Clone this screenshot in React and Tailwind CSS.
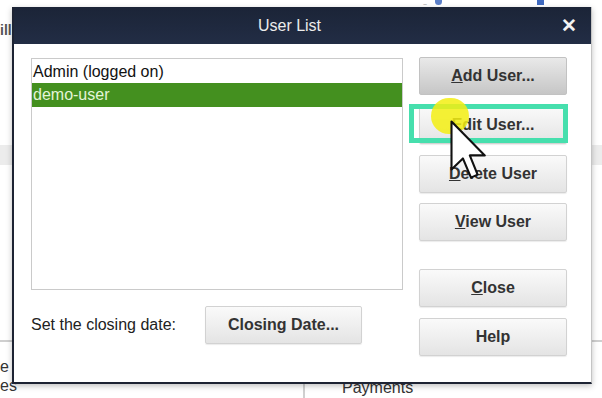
import React from 'react';

const btn =
  'flex items-center justify-center w-[148px] h-[38px] rounded-[2px] border border-[#d2d2d2] bg-gradient-to-b from-[#fafafa] to-[#e4e4e4] text-[16px] font-bold text-[#333] shadow-[0_1px_1px_rgba(0,0,0,0.08)]';

const Cursor = () => (
  <svg width="36" height="60" viewBox="0 0 12 20" className="block">
    <path
      d="M0.5 0.5 L0.5 16.5 L4.3 12.8 L7 19.2 L9.2 18.2 L6.6 11.8 L11.6 11.8 Z"
      fill="#fff"
      stroke="#111"
      strokeWidth="0.7"
      strokeLinejoin="round"
    />
  </svg>
);

export default function App() {
  return (
    <div className="relative w-[602px] h-[398px] overflow-hidden bg-white font-['Liberation_Sans',Arial,sans-serif]">
      {/* app behind the dialog */}
      <div className="flex flex-col">
        <div className="flex h-[7px] items-start">
          <span className="ml-[423px] mt-[1px] text-[7px] leading-none text-[#999]">~</span>
          <span className="ml-[8px] w-[7px] h-[5px] rounded-b-full bg-[#5b7fc8]" />
          <span className="ml-[95px] w-[7px] h-[5px] bg-[#3f6ac0]" />
        </div>
        <div className="mt-[15px] h-[16px] text-[14px] font-bold leading-[16px] text-[#555]">ill</div>
        <div className="mt-[107px] h-[20px] bg-[#ececec]" />
        <div className="mt-[175px] h-[2px] bg-[#cfcfcf]" />
        <div className="flex h-[57px]">
          <div className="w-[303px] flex flex-col text-[16px] leading-[19px] text-[#333]">
            <span className="mt-[15px]">e</span>
            <span>es</span>
          </div>
          <div className="w-[2px] bg-[#d0d0d0]" />
          <div className="pl-[37px] pt-[36px] text-[16px] leading-[19px] text-[#333]">Payments</div>
        </div>
      </div>

      {/* User List dialog */}
      <div className="absolute left-[12px] top-[7px] w-[580px] h-[377px] flex flex-col bg-white border-l-2 border-b-2 border-l-[#1d2333] border-b-[#1d2333] border-r border-r-[#c4c4c4] shadow-[0_2px_6px_rgba(0,0,0,0.25)]">
        <div className="flex h-[37px] shrink-0 items-center bg-gradient-to-b from-[#1b2437] to-[#222d45]">
          <div className="flex-1 pl-[4px] text-center text-[16px] text-[#ececec]">User List</div>
          <div className="w-[30px] text-[19px] font-bold leading-none text-[#f2f2f2]">✕</div>
        </div>

        <div className="flex pl-[17px]">
          <div className="flex flex-col pt-[14px]">
            <div className="w-[372px] h-[232px] border border-[#cacaca] bg-white text-[16px] leading-[24px]">
              <div className="h-[24px] pl-[1px] pt-[1px] text-[#111]">Admin (logged on)</div>
              <div className="h-[24px] bg-[#44901f] pl-[1px] text-[#e4f5d8]">demo-user</div>
            </div>
            <div className="mt-[16px] flex items-center">
              <span className="w-[174px] text-[16px] text-[#222]">Set the closing date:</span>
              <div className={btn + ' !w-[157px]'}>Closing Date...</div>
            </div>
          </div>

          <div className="ml-[16px] flex flex-col pt-[13px]">
            <div className="flex items-center justify-center w-[148px] h-[38px] rounded-[2px] border border-[#c2c2c2] bg-gradient-to-b from-[#e9e9e9] to-[#c6c6c6] text-[16px] font-bold text-[#333]">
              <span><u>A</u>dd User...</span>
            </div>
            <div className="relative mt-[11px]">
              <div className={btn}>
                <span><u>E</u>dit User...</span>
              </div>
              <div className="absolute -left-[10px] -top-[2px] w-[159px] h-[39px] border-[5px] border-[#46dfad]" />
              <div className="absolute left-[12px] -top-[8px] w-[38px] h-[36px] rounded-full bg-[#f3ee12]/85" />
              <div className="absolute left-[31px] top-[14px]">
                <Cursor />
              </div>
            </div>
            <div className={btn + ' mt-[11px]'}>
              <span><u>D</u>elete User</span>
            </div>
            <div className={btn + ' mt-[10px]'}>
              <span><u>V</u>iew User</span>
            </div>
            <div className={btn + ' mt-[28px]'}>
              <span><u>C</u>lose</span>
            </div>
            <div className={btn + ' mt-[11px]'}>Help</div>
          </div>
        </div>
      </div>
    </div>
  );
}
